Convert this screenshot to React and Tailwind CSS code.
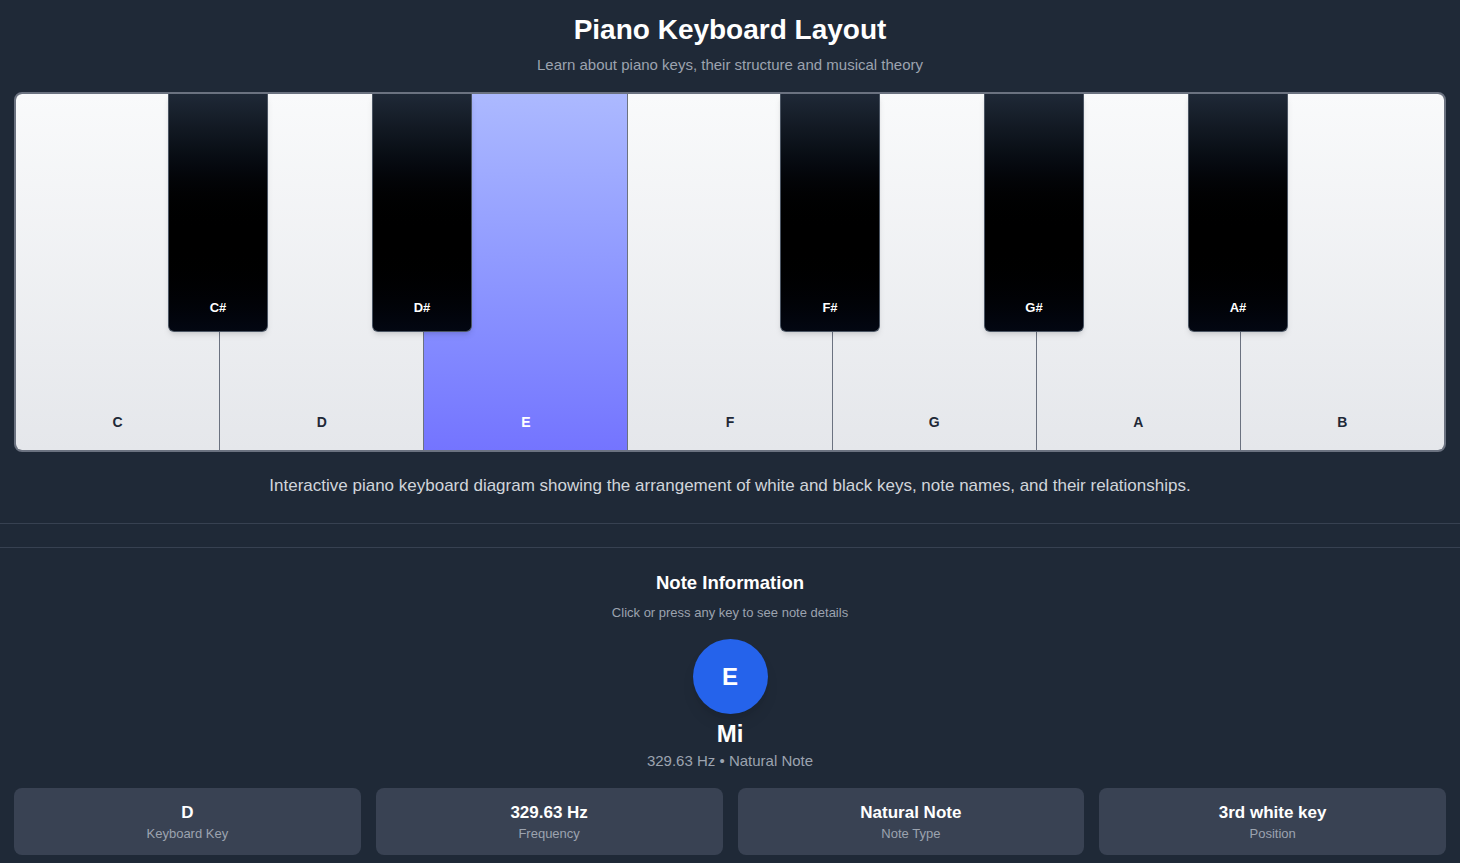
import React, { useState } from 'react';

const whiteKeys = [
  { note: 'C', solfege: 'Do', freq: '261.63', key: 'A' },
  { note: 'D', solfege: 'Ré', freq: '293.66', key: 'S' },
  { note: 'E', solfege: 'Mi', freq: '329.63', key: 'D' },
  { note: 'F', solfege: 'Fa', freq: '349.23', key: 'F' },
  { note: 'G', solfege: 'Sol', freq: '392.00', key: 'G' },
  { note: 'A', solfege: 'La', freq: '440.00', key: 'H' },
  { note: 'B', solfege: 'Si', freq: '493.88', key: 'J' },
];

// black keys sit over the boundary after white key index `after`
const blackKeys = [
  { note: 'C#', after: 1 },
  { note: 'D#', after: 2 },
  { note: 'F#', after: 4 },
  { note: 'G#', after: 5 },
  { note: 'A#', after: 6 },
];

const ordinals = ['1st', '2nd', '3rd', '4th', '5th', '6th', '7th'];

const App = () => {
  const [active, setActive] = useState(2);
  const current = whiteKeys[active];

  return (
    <div className="min-h-screen w-[1460px] bg-[#1f2937] text-white font-[family-name:Liberation_Sans,Arial,sans-serif]">
      {/* Header */}
      <div className="pt-[12px] text-center">
        <h1 className="text-[28px] leading-[36px] font-bold">Piano Keyboard Layout</h1>
        <p className="mt-[7px] text-[15px] leading-5 text-[#9ca3af]">
          Learn about piano keys, their structure and musical theory
        </p>
      </div>

      {/* Keyboard */}
      <div className="mx-[14px] mt-[17px] h-[360px] relative border-2 border-[#6b7280] rounded-lg overflow-hidden">
        <div className="flex h-full">
          {whiteKeys.map((k, i) => (
            <button
              key={k.note}
              onClick={() => setActive(i)}
              className={
                'flex-1 flex items-end justify-center pb-[18px] text-sm font-bold ' +
                (i < whiteKeys.length - 1 ? 'border-r border-[#6b7280] ' : '') +
                (i === active
                  ? 'bg-linear-to-b from-[#acb9ff] to-[#7474ff] text-white'
                  : 'bg-linear-to-b from-[#f9fafb] to-[#e5e7eb] text-[#1f2937]')
              }
            >
              {k.note}
            </button>
          ))}
        </div>
        {blackKeys.map((b) => (
          <div
            key={b.note}
            className="absolute top-0 w-[100px] h-[238px] flex items-end justify-center pb-[14px] text-[13px] font-bold text-white bg-linear-to-b from-[#1f2937] via-black via-60% to-[#030712] border border-t-0 border-[#4b5563] rounded-b-md shadow-md"
            style={{ left: b.after * 204 - 52 }}
          >
            {b.note}
          </div>
        ))}
      </div>

      {/* Description */}
      <p className="mt-[22px] pb-[25px] text-center text-[17px] leading-6 text-[#d1d5db] border-b border-[#374151]">
        Interactive piano keyboard diagram showing the arrangement of white and black keys, note names, and their relationships.
      </p>

      {/* Note info */}
      <div className="mt-[23px] border-t border-[#374151] pt-[22px] flex flex-col items-center">
        <h2 className="text-[18.5px] leading-[26px] font-bold">Note Information</h2>
        <p className="mt-[8px] text-[13px] leading-[18px] text-[#9ca3af]">Click or press any key to see note details</p>
        <div className="mt-[17px] w-[75px] h-[75px] rounded-full bg-[#2563eb] flex items-center justify-center text-2xl font-bold shadow-lg">
          {current.note}
        </div>
        <div className="mt-[4px] text-2xl leading-8 font-bold">{current.solfege}</div>
        <div className="mt-[1px] text-[15px] leading-5 text-[#9ca3af]">{current.freq} Hz • Natural Note</div>
      </div>

      <div className="mx-[14px] mt-[17px] grid grid-cols-4 gap-[15px] pb-2">
        {[
          { value: current.key, label: 'Keyboard Key' },
          { value: current.freq + ' Hz', label: 'Frequency' },
          { value: 'Natural Note', label: 'Note Type' },
          { value: ordinals[active] + ' white key', label: 'Position' },
        ].map((c) => (
          <div key={c.label} className="bg-[#394253] rounded-lg pt-[13px] pb-[12px] text-center">
            <div className="text-[17px] leading-6 font-bold">{c.value}</div>
            <div className="text-[13px] leading-[18px] text-[#9ca3af]">{c.label}</div>
          </div>
        ))}
      </div>
    </div>
  );
};

export default App;
